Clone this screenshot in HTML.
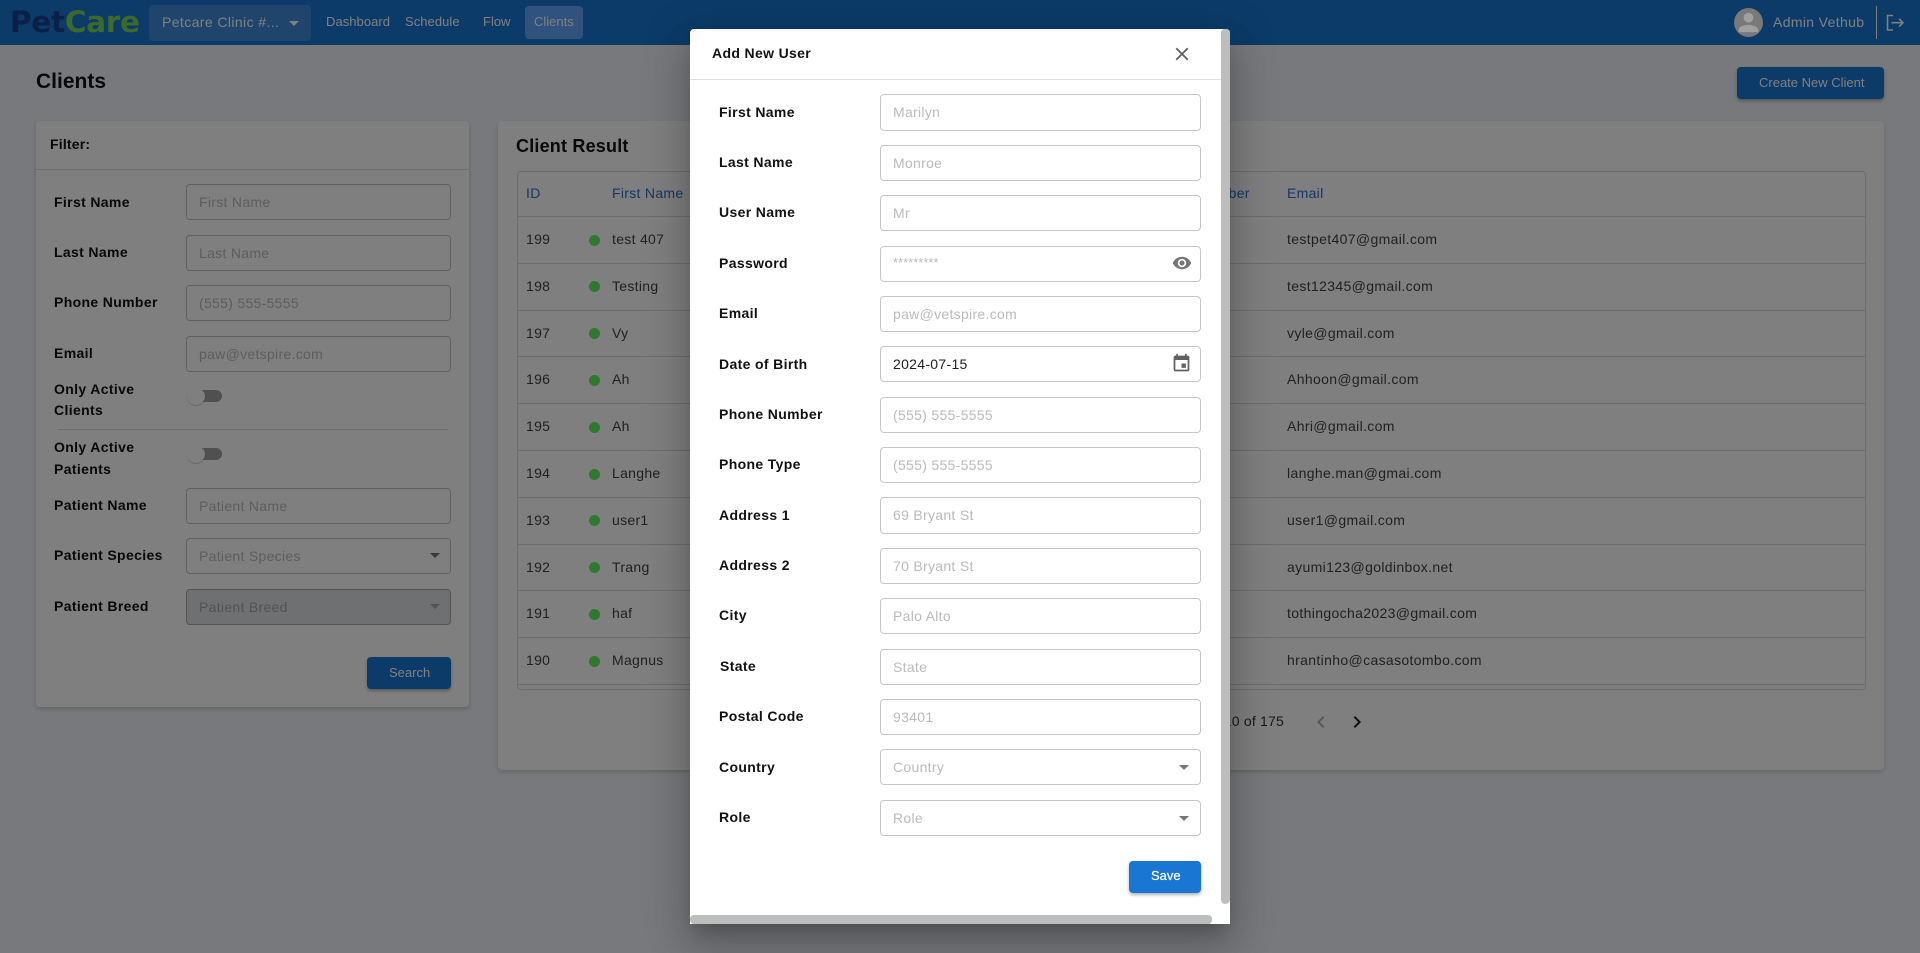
<!DOCTYPE html>
<html lang="en"><head><meta charset="utf-8"><title>Clients</title>
<style>
html,body{margin:0;padding:0;width:1920px;height:953px;overflow:hidden;background:#eef3f8;font-family:"Liberation Sans",Arial,sans-serif;color:#212121}
*{box-sizing:border-box}
.a,.t,.l,.i,.m,.c{position:absolute}
.t{white-space:nowrap;line-height:20px}
.l{white-space:nowrap;font-weight:bold;font-size:14px;letter-spacing:.35px;line-height:20px;color:#111}
.i{border:1px solid #c6c6c6;border-radius:4px;height:36px;line-height:35px;font-size:14px;letter-spacing:.3px;color:#bababa;background:#fff;white-space:nowrap}
.f{left:186px;width:265px;padding-left:12px;border-color:#c0c0c0}
.m{left:880px;width:321px;padding-left:12px}
.c{left:1287px;font-size:14px;letter-spacing:.35px;color:#424242;white-space:nowrap;line-height:20px}
.n{left:526px;font-size:14px;letter-spacing:.3px;color:#424242;position:absolute;line-height:20px}
.fn{left:612px;font-size:14px;letter-spacing:.3px;color:#424242;position:absolute;line-height:20px;white-space:nowrap}
.d{position:absolute;left:589px;width:11px;height:11px;border-radius:50%;background:#5cf060}
.hr{position:absolute;left:517px;width:1349px;height:1px;background:#dadada}
.arr{position:absolute;width:0;height:0;border-left:5px solid transparent;border-right:5px solid transparent;border-top:5px solid #757575}
.card{position:absolute;background:#fff;border-radius:4px;box-shadow:0 2px 4px rgba(0,0,0,.18)}
</style></head><body>

<!-- header -->
<div class="a" style="left:0;top:0;width:1920px;height:45px;background:#1976d2"></div>
<div class="t" style="left:10px;top:4px;font-family:'DejaVu Sans',sans-serif;font-size:29.5px;font-weight:bold;letter-spacing:-.3px;line-height:36px;color:#14408c">Pet<span style="color:#76d458">Care</span></div>
<div class="a" style="left:149px;top:5px;width:162px;height:36px;background:#3e8bd9;border-radius:4px"></div>
<div class="t" style="left:162px;top:12px;font-size:14px;letter-spacing:.4px;color:#fff">Petcare Clinic #...</div>
<div class="arr" style="left:289px;top:21px;border-top-color:#fff"></div>
<div class="t" style="left:326px;top:12px;font-size:13px;letter-spacing:.05px;color:#fff">Dashboard</div>
<div class="t" style="left:405px;top:12px;font-size:13px;letter-spacing:.05px;color:#fff">Schedule</div>
<div class="t" style="left:483px;top:12px;font-size:13px;color:#fff">Flow</div>
<div class="a" style="left:525px;top:6px;width:58px;height:33px;background:#5ea6fa;border-radius:4px"></div>
<div class="t" style="left:534px;top:12px;font-size:13px;color:#fff">Clients</div>
<div class="t" style="left:1773px;top:12px;font-size:14px;letter-spacing:.35px;color:#fff">Admin Vethub</div>
<div class="a" style="left:1876px;top:6px;width:1px;height:33px;background:#fff"></div>
<svg class="a" style="left:1885px;top:13px" width="20" height="20" viewBox="0 0 20 20" fill="none" stroke="#fff" stroke-width="1.6"><path d="M8 2.500H2.500v14.500H8"/><path d="M6.500 9.700H18M14.200 5.800L18 9.700l-3.800 3.900"/></svg>

<!-- page title -->
<div class="t" style="left:36px;top:70px;font-size:21px;font-weight:bold;line-height:24px;color:#111">Clients</div>
<div class="a" style="left:1737px;top:67px;width:147px;height:32px;background:#1976d2;border-radius:4px;box-shadow:0 2px 3px rgba(0,0,0,.3)"></div>
<div class="t" style="left:1759px;top:73px;font-size:13px;color:#fff">Create New Client</div>

<!-- filter card -->
<div class="card" style="left:36px;top:121px;width:433px;height:586px"></div>
<div class="a" style="left:36px;top:169px;width:433px;height:1px;background:#dcdcdc"></div>
<div class="l" style="left:50px;top:134px;letter-spacing:.2px">Filter:</div>

<div class="l" style="left:54px;top:192px">First Name</div><div class="i f" style="top:184px">First Name</div>
<div class="l" style="left:54px;top:242px">Last Name</div><div class="i f" style="top:235px">Last Name</div>
<div class="l" style="left:54px;top:292px">Phone Number</div><div class="i f" style="top:285px">(555) 555-5555</div>
<div class="l" style="left:54px;top:343px">Email</div><div class="i f" style="top:336px">paw@vetspire.com</div>

<div class="l" style="left:54px;top:379px">Only Active</div>
<div class="l" style="left:54px;top:400px">Clients</div>
<div class="a" style="left:194px;top:390px;width:28px;height:12px;border-radius:6px;background:#a0a0a0"></div>
<div class="a" style="left:187px;top:388px;width:18px;height:17px;border-radius:50%;background:#fff;box-shadow:0 1px 1px rgba(0,0,0,.2)"></div>
<div class="a" style="left:58px;top:429px;width:390px;height:1px;background:#dcdcdc"></div>
<div class="l" style="left:54px;top:437px">Only Active</div>
<div class="l" style="left:54px;top:459px">Patients</div>
<div class="a" style="left:194px;top:448px;width:28px;height:12px;border-radius:6px;background:#a0a0a0"></div>
<div class="a" style="left:187px;top:446px;width:18px;height:17px;border-radius:50%;background:#fff;box-shadow:0 1px 1px rgba(0,0,0,.2)"></div>

<div class="l" style="left:54px;top:495px">Patient Name</div><div class="i f" style="top:488px">Patient Name</div>
<div class="l" style="left:54px;top:545px">Patient Species</div><div class="i f" style="top:538px">Patient Species<div class="arr" style="left:243px;top:14px"></div></div>
<div class="l" style="left:54px;top:596px">Patient Breed</div><div class="i f" style="top:589px;background:#dfe1e3;border-color:#a8a8a8;color:#a5a5a5">Patient Breed<div class="arr" style="left:243px;top:14px;border-top-color:#a8a8a8"></div></div>
<div class="a" style="left:367px;top:657px;width:84px;height:32px;background:#1976d2;border-radius:4px;box-shadow:0 2px 3px rgba(0,0,0,.3)"></div>
<div class="t" style="left:389px;top:663px;font-size:13px;color:#fff">Search</div>

<!-- result card -->
<div class="card" style="left:498px;top:121px;width:1386px;height:649px"></div>
<div class="t" style="left:516px;top:135px;font-size:18px;font-weight:bold;letter-spacing:.2px;line-height:22px;color:#111">Client Result</div>
<div class="a" style="left:517px;top:171px;width:1349px;height:519px;border:1px solid #dadada;border-radius:4px"></div>
<div class="t" style="left:526px;top:183px;font-size:14px;letter-spacing:.3px;color:#2a70c8">ID</div>
<div class="t" style="left:612px;top:183px;font-size:14px;letter-spacing:.3px;color:#2a70c8">First Name</div>
<div class="t" style="left:1152px;top:183px;font-size:14px;letter-spacing:.3px;color:#2a70c8">Phone Number</div>
<div class="t" style="left:1287px;top:183px;font-size:14px;letter-spacing:.3px;color:#2a70c8">Email</div>

<div class="hr" style="top:216px"></div><div class="hr" style="top:263px"></div><div class="hr" style="top:310px"></div><div class="hr" style="top:356px"></div><div class="hr" style="top:403px"></div><div class="hr" style="top:450px"></div><div class="hr" style="top:497px"></div><div class="hr" style="top:544px"></div><div class="hr" style="top:590px"></div><div class="hr" style="top:637px"></div><div class="hr" style="top:684px"></div>

<div class="n" style="top:229px">199</div><div class="d" style="top:235px"></div><div class="fn" style="top:229px">test 407</div><div class="c" style="top:229px">testpet407@gmail.com</div>
<div class="n" style="top:276px">198</div><div class="d" style="top:281px"></div><div class="fn" style="top:276px">Testing</div><div class="c" style="top:276px">test12345@gmail.com</div>
<div class="n" style="top:323px">197</div><div class="d" style="top:328px"></div><div class="fn" style="top:323px">Vy</div><div class="c" style="top:323px">vyle@gmail.com</div>
<div class="n" style="top:369px">196</div><div class="d" style="top:375px"></div><div class="fn" style="top:369px">Ah</div><div class="c" style="top:369px">Ahhoon@gmail.com</div>
<div class="n" style="top:416px">195</div><div class="d" style="top:422px"></div><div class="fn" style="top:416px">Ah</div><div class="c" style="top:416px">Ahri@gmail.com</div>
<div class="n" style="top:463px">194</div><div class="d" style="top:469px"></div><div class="fn" style="top:463px">Langhe</div><div class="c" style="top:463px">langhe.man@gmai.com</div>
<div class="n" style="top:510px">193</div><div class="d" style="top:515px"></div><div class="fn" style="top:510px">user1</div><div class="c" style="top:510px">user1@gmail.com</div>
<div class="n" style="top:557px">192</div><div class="d" style="top:562px"></div><div class="fn" style="top:557px">Trang</div><div class="c" style="top:557px">ayumi123@goldinbox.net</div>
<div class="n" style="top:603px">191</div><div class="d" style="top:609px"></div><div class="fn" style="top:603px">haf</div><div class="c" style="top:603px">tothingocha2023@gmail.com</div>
<div class="n" style="top:650px">190</div><div class="d" style="top:656px"></div><div class="fn" style="top:650px">Magnus</div><div class="c" style="top:650px">hrantinho@casasotombo.com</div>

<div class="t" style="left:1180px;width:104px;text-align:right;top:711px;font-size:14px;letter-spacing:.2px;color:#333">1-10 of 175</div>
<svg class="a" style="left:1309px;top:710px" width="24" height="24" viewBox="0 0 24 24"><path fill="#b0b0b0" d="M15.410 7.410L14 6l-6 6 6 6 1.410-1.410L10.830 12z"/></svg>
<svg class="a" style="left:1345px;top:710px" width="24" height="24" viewBox="0 0 24 24"><path fill="#222" d="M10 6L8.590 7.410 13.170 12l-4.580 4.590L10 18l6-6z"/></svg>

<!-- backdrop -->
<div class="a" style="left:0;top:0;width:1920px;height:953px;background:rgba(0,0,0,.5)"></div>

<!-- avatar (above backdrop with its dimmed tones) -->
<div class="a" style="left:1734px;top:8px;width:29px;height:29px;border-radius:50%;background:#797979"></div>
<svg class="a" style="left:1734px;top:8px" width="29" height="29" viewBox="0 0 24 24"><path fill="#a0a0a0" d="M12 12c2.210 0 4-1.790 4-4s-1.790-4-4-4-4 1.790-4 4 1.790 4 4 4zm0 2c-2.670 0-8 1.340-8 4v2h16v-2c0-2.660-5.330-4-8-4z"/></svg>

<!-- modal -->
<div class="a" style="left:690px;top:29px;width:540px;height:895px;background:#fff;border-radius:4px 4px 0 0;box-shadow:0 11px 15px -7px rgba(0,0,0,.2),0 24px 38px 3px rgba(0,0,0,.14),0 9px 46px 8px rgba(0,0,0,.12)"></div>
<div class="l" style="left:712px;top:43px;letter-spacing:.35px">Add New User</div>
<svg class="a" style="left:1171px;top:43px" width="22" height="22" viewBox="0 0 24 24"><path fill="#616161" d="M19 6.410L17.590 5 12 10.590 6.410 5 5 6.410 10.590 12 5 17.590 6.410 19 12 13.410 17.590 19 19 17.590 13.410 12z"/></svg>
<div class="a" style="left:690px;top:79px;width:531px;height:1px;background:#e0e0e0"></div>

<div class="l" style="left:719px;top:102px">First Name</div><div class="i m" style="top:94px;height:37px">Marilyn</div>
<div class="l" style="left:719px;top:152px">Last Name</div><div class="i m" style="top:145px">Monroe</div>
<div class="l" style="left:719px;top:202px">User Name</div><div class="i m" style="top:195px">Mr</div>
<div class="l" style="left:719px;top:253px">Password</div><div class="i m" style="top:246px;letter-spacing:0;line-height:32px;font-size:13px">*********</div>
<svg class="a" style="left:1172px;top:253px" width="20" height="20" viewBox="0 0 24 24"><path fill="#757575" d="M12 4.500C7 4.500 2.730 7.610 1 12c1.730 4.390 6 7.500 11 7.500s9.270-3.110 11-7.500c-1.730-4.390-6-7.500-11-7.500zM12 17c-2.760 0-5-2.240-5-5s2.240-5 5-5 5 2.240 5 5-2.240 5-5 5zm0-8c-1.660 0-3 1.340-3 3s1.340 3 3 3 3-1.340 3-3-1.340-3-3-3z"/></svg>
<div class="l" style="left:719px;top:303px">Email</div><div class="i m" style="top:296px">paw@vetspire.com</div>
<div class="l" style="left:719px;top:354px">Date of Birth</div><div class="i m" style="top:346px;color:#212121">2024-07-15</div>
<svg class="a" style="left:1171px;top:353px" width="21" height="21" viewBox="0 0 24 24"><path fill="#616161" d="M17 12h-5v5h5v-5zM16 1v2H8V1H6v2H5c-1.110 0-1.990.9-1.990 2L3 19c0 1.100.89 2 2 2h14c1.100 0 2-.9 2-2V5c0-1.100-.9-2-2-2h-1V1h-2zm3 18H5V8h14v11z"/></svg>
<div class="l" style="left:719px;top:404px">Phone Number</div><div class="i m" style="top:397px">(555) 555-5555</div>
<div class="l" style="left:719px;top:454px">Phone Type</div><div class="i m" style="top:447px">(555) 555-5555</div>
<div class="l" style="left:719px;top:505px">Address 1</div><div class="i m" style="top:497px;height:37px">69 Bryant St</div>
<div class="l" style="left:719px;top:555px">Address 2</div><div class="i m" style="top:548px">70 Bryant St</div>
<div class="l" style="left:719px;top:605px">City</div><div class="i m" style="top:598px">Palo Alto</div>
<div class="l" style="left:720px;top:656px">State</div><div class="i m" style="top:649px">State</div>
<div class="l" style="left:719px;top:706px">Postal Code</div><div class="i m" style="top:699px">93401</div>
<div class="l" style="left:719px;top:757px">Country</div><div class="i m" style="top:749px">Country<div class="arr" style="left:298px;top:15px"></div></div>
<div class="l" style="left:719px;top:807px">Role</div><div class="i m" style="top:800px">Role<div class="arr" style="left:298px;top:15px"></div></div>
<div class="a" style="left:1129px;top:861px;width:72px;height:32px;background:#1976d2;border-radius:4px;box-shadow:0 2px 3px rgba(0,0,0,.3)"></div>
<div class="t" style="left:1151px;top:866px;font-size:13px;font-weight:normal;color:#fff;-webkit-text-stroke:.2px #fff">Save</div>

<!-- modal scrollbars -->
<div class="a" style="left:1221px;top:29px;width:9px;height:875px;background:#bdbdbd;border-radius:4px 4px 5px 5px"></div>
<div class="a" style="left:690px;top:915px;width:522px;height:9px;background:#bdbdbd;border-radius:4px"></div>
</body></html>
